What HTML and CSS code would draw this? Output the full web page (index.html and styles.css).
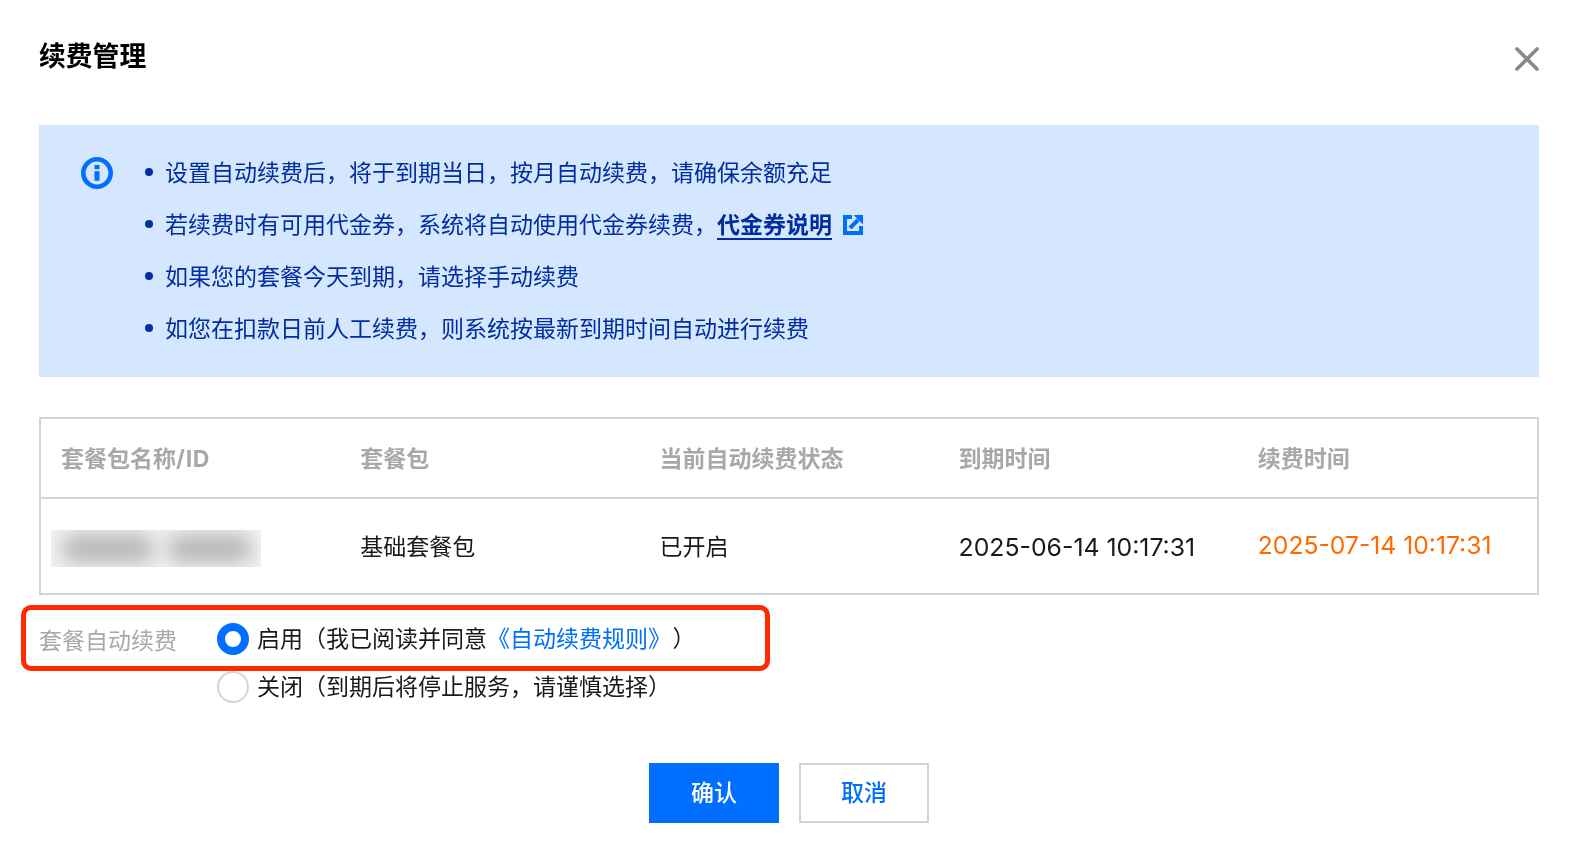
FILE: index.html
```html
<!DOCTYPE html>
<html lang="zh-CN">
<head>
<meta charset="utf-8">
<title>续费管理</title>
<link rel="stylesheet" href="styles.css">
</head>
<body>
<main class="dialog">
  <header class="dialog-head">
    <h1 class="dialog-title">续费管理</h1>
    <svg class="close-icon" viewBox="0 0 24 24" aria-label="关闭"><path d="M2 2 22 22M22 2 2 22"/></svg>
  </header>

  <section class="alert">
    <svg class="info-icon" viewBox="0 0 32 32"><circle cx="16" cy="16" r="13.7" class="info-ring"/><rect x="13.5" y="8" width="5" height="4.2" class="info-mark"/><rect x="13.5" y="14.2" width="5" height="9.6" class="info-mark"/></svg>
    <ul class="alert-list">
      <li>设置自动续费后，将于到期当日，按月自动续费，请确保余额充足</li>
      <li>若续费时有可用代金券，系统将自动使用代金券续费，<a class="alert-link">代金券说明</a><svg class="ext-icon" viewBox="0 0 20 20"><path class="ext-frame" d="M9 2H2V18H18V11"/><path class="ext-arrow" d="M7 13 15 5"/><path class="ext-head" d="M10.5 0H20V9.5Z"/></svg></li>
      <li>如果您的套餐今天到期，请选择手动续费</li>
      <li>如您在扣款日前人工续费，则系统按最新到期时间自动进行续费</li>
    </ul>
  </section>

  <section class="table">
    <div class="table-row table-head">
      <div class="cell">套餐包名称<span class="head-id">/ID</span></div>
      <div class="cell">套餐包</div>
      <div class="cell">当前自动续费状态</div>
      <div class="cell">到期时间</div>
      <div class="cell">续费时间</div>
    </div>
    <div class="table-row table-body">
      <div class="cell cell-mask"><div class="masked"><span class="mask-a"></span><span class="mask-b"></span></div></div>
      <div class="cell cell-text">基础套餐包</div>
      <div class="cell cell-text">已开启</div>
      <div class="cell cell-date">2025-06-14 10:17:31</div>
      <div class="cell cell-renew">2025-07-14 10:17:31</div>
    </div>
  </section>

  <section class="form">
    <div class="form-highlight"></div>
    <div class="form-label">套餐自动续费</div>
    <div class="radio-group">
      <div class="radio-row"><span class="radio radio-on"></span><span class="radio-text">启用（我已阅读并同意<a class="rule-link">《自动续费规则》</a>）</span></div>
      <div class="radio-row"><span class="radio"></span><span class="radio-text">关闭（到期后将停止服务，请谨慎选择）</span></div>
    </div>
  </section>

  <footer class="actions">
    <button class="btn btn-primary" type="button">确认</button>
    <button class="btn btn-ghost" type="button">取消</button>
  </footer>
</main>
</body>
</html>
```
FILE: styles.css
```css
* { box-sizing: border-box; }
html, body { margin: 0; padding: 0; background: #fff; }
body {
  width: 1579px;
  height: 852px;
  overflow: hidden;
  font-family: Inter, "Noto Sans CJK SC", sans-serif;
  font-size: 23px;
  color: #1a1a1a;
}
.dialog { padding: 39px 40px 29px 39px; filter: blur(0.35px); }

.dialog-head { display: flex; justify-content: space-between; align-items: flex-start; height: 34px; margin-bottom: 52px; }
.dialog-title { margin: 0; font-size: 26.8px; line-height: 34px; font-weight: 700; color: #000; }
.close-icon { width: 24px; height: 24px; margin-top: 8px; fill: none; stroke: #888; stroke-width: 3.6; stroke-linecap: round; }

.alert { display: flex; height: 252px; padding: 22px 0 22px 42px; background: #d5e7ff; color: #002da0; margin-bottom: 40px; }
.info-icon { width: 32px; height: 32px; margin-top: 10px; flex: none; }
.info-ring { fill: none; stroke: #006eff; stroke-width: 4.6; }
.info-mark { fill: #006eff; }
.alert-list { list-style: none; margin: 0 0 0 32px; padding: 0; }
.alert-list li { position: relative; display: flex; align-items: center; height: 52px; padding: 0 0 4px 20px; white-space: nowrap; }
.alert-list li::before { content: ""; position: absolute; left: 0; top: 21px; width: 8px; height: 8px; border-radius: 50%; background: #002da0; }
.alert-link { font-weight: 700; color: #002da0; border-bottom: 2.5px solid #002da0; line-height: 26px; margin-top: 6px; }
.ext-icon { width: 20px; height: 20px; margin: 4px 0 0 11px; flex: none; }
.ext-frame { fill: none; stroke: #006eff; stroke-width: 4; }
.ext-arrow { fill: none; stroke: #006eff; stroke-width: 4; }
.ext-head { fill: #006eff; }

.table { border: 2px solid #cfd5de; }
.table-row { display: grid; grid-template-columns: repeat(5, 1fr); align-items: center; }
.table-head { height: 80px; border-bottom: 2px solid #cfd5de; font-weight: 700; color: #a8a8a8; }
.table-body { height: 94px; }
.cell { padding-left: 20px; white-space: nowrap; }
.table-head .cell { padding-bottom: 2px; }
.head-id { letter-spacing: 0.7px; }
.cell-text { padding-bottom: 3px; }
.cell-mask { padding-top: 5px; }
.masked { display: flex; gap: 16px; width: 210px; height: 37px; margin-left: -10px; padding: 5px 0 5px 12px; background: #f3f3f3; overflow: hidden; }
.mask-a, .mask-b { display: block; height: 27px; background: #b4b4b4; filter: blur(10px); border-radius: 8px; }
.mask-a { width: 90px; }
.mask-b { width: 82px; }
.cell-date { font-size: 24.8px; padding-top: 1px; }
.cell-renew { font-size: 24.7px; color: #ff6a00; padding-bottom: 3px; }

.form { position: relative; display: flex; margin-top: 20px; }
.form-highlight { position: absolute; left: -18px; top: -10px; width: 749px; height: 66px; border: 5px solid #ff2a00; border-radius: 10px; }
.form-label { width: 178px; flex: none; line-height: 48px; color: #a8a8a8; padding-top: 2px; }
.radio-row { display: flex; align-items: center; gap: 8px; height: 48px; white-space: nowrap; }
.radio { width: 32px; height: 32px; border-radius: 50%; border: 2px solid #cfd5de; flex: none; background: #fff; }
.radio-on { border: 8px solid #006eff; }
.radio-text { padding-bottom: 5px; }
.rule-link { color: #006eff; margin-right: 13px; }

.actions { display: flex; justify-content: center; gap: 20px; margin-top: 52px; }
.btn { width: 130px; height: 60px; padding: 0 0 5px; font: inherit; font-weight: 500; border-radius: 0; }
.btn-primary { background: #006eff; color: #fff; border: 0; }
.btn-ghost { background: #fff; color: #006eff; border: 2px solid #cfd5de; }
```
